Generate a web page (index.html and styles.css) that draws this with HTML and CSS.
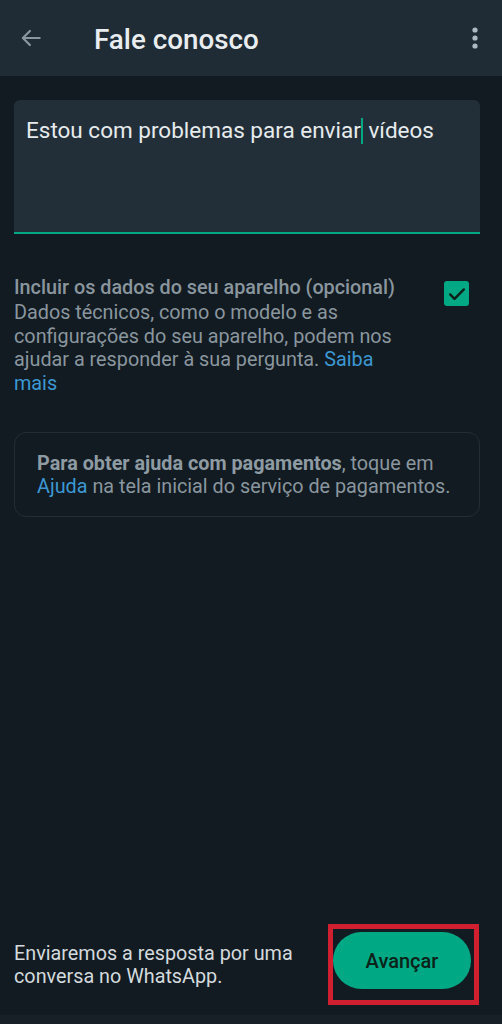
FILE: index.html
```
<!DOCTYPE html>
<html lang="pt-BR">
<head>
  <meta charset="UTF-8" />
  <meta name="viewport" content="width=device-width, initial-scale=1.0" />
  <title>Fale conosco</title>
  <link rel="stylesheet" href="styles.css">
</head>
<body>
  <div class="screen">
    <header class="topbar">
      <svg class="back" viewBox="0 0 24 24" width="26" height="26">
        <path d="M20 12H5M11 5.5L4.5 12l6.5 6.5" fill="none" stroke="#8a979f" stroke-width="2" stroke-linecap="round" stroke-linejoin="round"/>
      </svg>
      <h1>Fale conosco</h1>
      <svg class="menu" viewBox="0 0 6 24" width="6" height="24">
        <circle cx="3" cy="4" r="2.6" fill="#aebac1"/>
        <circle cx="3" cy="12" r="2.6" fill="#aebac1"/>
        <circle cx="3" cy="20" r="2.6" fill="#aebac1"/>
      </svg>
    </header>

    <main class="content">
      <div class="message-box">
        <p>Estou com problemas para enviar<span class="caret"></span> vídeos</p>
      </div>

      <div class="device-row">
        <div class="device-text">
          <h2>Incluir os dados do seu aparelho (opcional)</h2>
          <p>Dados técnicos, como o modelo e as configurações do seu aparelho, podem nos ajudar a responder à sua pergunta. <a href="#">Saiba mais</a></p>
        </div>
        <span class="checkbox">
          <svg viewBox="0 0 24 24" width="22" height="22">
            <path d="M4.5 12.5l4.8 4.8L19.5 7" fill="none" stroke="#0b1f18" stroke-width="2.6" stroke-linecap="round" stroke-linejoin="round"/>
          </svg>
        </span>
      </div>

      <div class="notice">
        <p><strong>Para obter ajuda com pagamentos</strong>, toque em <a href="#">Ajuda</a> na tela inicial do serviço de pagamentos.</p>
      </div>
    </main>

    <footer class="bottom">
      <p>Enviaremos a resposta por uma<br>conversa no WhatsApp.</p>
      <div class="highlight">
        <button class="next">Avançar</button>
      </div>
    </footer>
    <div class="navstrip"></div>
  </div>
</body>
</html>
```

FILE: styles.css
```
html, body {
  margin: 0;
  padding: 0;
  background-color: #121b22;
  font-family: Roboto, "Noto Sans", sans-serif;
}

.screen {
  width: 502px;
  height: 1024px;
  display: flex;
  flex-direction: column;
  overflow: hidden;
}

.topbar {
  height: 76px;
  flex-shrink: 0;
  background-color: #202c35;
  display: flex;
  align-items: center;
  padding: 0 24px 0 18px;
  box-sizing: border-box;
}

.topbar h1 {
  margin: 0 0 0 50px;
  flex: 1;
  font-size: 27.8px;
  font-weight: 500;
  color: #e9edef;
  margin-top: 2px;
}

.topbar .menu {
  margin-top: -1px;
}

.content {
  flex: 1;
  padding: 24px 22px 0 14px;
}

.message-box {
  height: 132px;
  background-color: #232f38;
  border-radius: 6px 6px 0 0;
  border-bottom: 2px solid #00a884;
}

.message-box p {
  margin: 0;
  padding: 17px 8px 0 12px;
  font-size: 22.5px;
  line-height: 26px;
  color: #e6ebed;
}

.caret {
  display: inline-block;
  width: 2px;
  height: 26px;
  background-color: #00a884;
  vertical-align: -6px;
}

.device-row {
  display: flex;
  align-items: flex-start;
  margin-top: 41px;
}

.device-text {
  flex: 1;
}

.device-text h2 {
  margin: 0;
  font-size: 19.8px;
  font-weight: 500;
  line-height: 26px;
  color: #8a969e;
}

.device-text p {
  margin: 0;
  font-size: 19.8px;
  line-height: 23.5px;
  color: #8a969e;
  max-width: 390px;
}

a {
  color: #3c98d2;
  text-decoration: none;
}

.checkbox {
  width: 25px;
  height: 25px;
  margin: 6px 11px 0 8px;
  background-color: #00a884;
  border-radius: 3px;
  display: flex;
  align-items: center;
  justify-content: center;
  flex-shrink: 0;
}

.notice {
  margin-top: 37px;
  border: 1px solid #232d34;
  border-radius: 12px;
  padding: 19px 10px 18px 22px;
}

.notice p {
  margin: 0;
  font-size: 19.8px;
  line-height: 23px;
  color: #8a969e;
}

.notice strong {
  font-weight: 700;
  color: #8f9ba3;
}

.bottom {
  display: flex;
  align-items: center;
  justify-content: space-between;
  padding: 0 23px 10px 14px;
}

.bottom p {
  margin: 0;
  font-size: 19.8px;
  line-height: 23px;
  color: #d4dadd;
}

.highlight {
  border: 5px solid #d01f2f;
  padding: 3px 3px 11px 0;
}

.next {
  width: 138px;
  height: 57px;
  border: none;
  border-radius: 29px;
  background-color: #00a884;
  color: #0b2219;
  font-family: Roboto, "Noto Sans", sans-serif;
  font-size: 20px;
  font-weight: 500;
}

.navstrip {
  height: 9px;
  flex-shrink: 0;
  background-color: #172027;
}
```
